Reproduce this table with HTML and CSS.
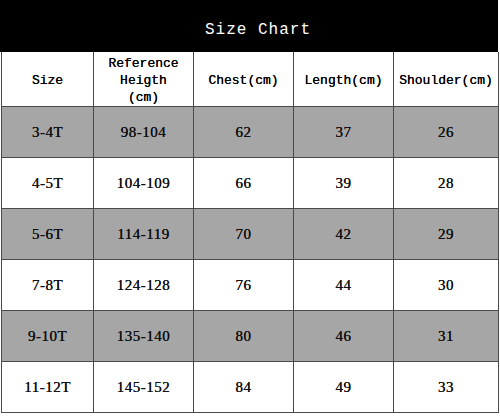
FILE: index.html
```html
<!DOCTYPE html>
<html>
<head>
<meta charset="utf-8">
<link rel="stylesheet" href="styles.css">
</head>
<body>
<div class="chart">
  <div class="title">Size Chart</div>
  <table class="grid">
    <colgroup>
      <col class="c1"><col class="c2"><col class="c3"><col class="c4"><col class="c5">
    </colgroup>
    <thead>
      <tr class="head">
        <th>Size</th>
        <th>Reference<br>Heigth<br>(cm)</th>
        <th>Chest(cm)</th>
        <th>Length(cm)</th>
        <th>Shoulder(cm)</th>
      </tr>
    </thead>
    <tbody>
      <tr class="shade"><td>3-4T</td><td>98-104</td><td>62</td><td>37</td><td>26</td></tr>
      <tr><td>4-5T</td><td>104-109</td><td>66</td><td>39</td><td>28</td></tr>
      <tr class="shade"><td>5-6T</td><td>114-119</td><td>70</td><td>42</td><td>29</td></tr>
      <tr><td>7-8T</td><td>124-128</td><td>76</td><td>44</td><td>30</td></tr>
      <tr class="shade"><td>9-10T</td><td>135-140</td><td>80</td><td>46</td><td>31</td></tr>
      <tr><td>11-12T</td><td>145-152</td><td>84</td><td>49</td><td>33</td></tr>
    </tbody>
  </table>
</div>
</body>
</html>
```
FILE: styles.css
```css
html, body {
  margin: 0;
  padding: 0;
  background: #fff;
}
.chart {
  width: 500px;
}
.title {
  width: 498px;
  height: 52px;
  background: #000;
  color: #fff;
  font-family: "Liberation Mono", monospace;
  font-size: 16px;
  letter-spacing: 1px;
  display: flex;
  align-items: center;
  justify-content: center;
  padding-left: 18px;
  padding-top: 7px;
  box-sizing: border-box;
}
.grid {
  margin-left: 1px;
  width: 497px;
  border-collapse: collapse;
  table-layout: fixed;
}
.c1 { width: 92px; }
.c2 { width: 100px; }
.c3 { width: 100px; }
.c4 { width: 100px; }
.c5 { width: 105px; }
.grid th, .grid td {
  border: 1px solid #4a4a4a;
  text-align: center;
  vertical-align: middle;
  padding: 0;
  color: #111;
}
.grid th {
  height: 51px;
  padding-top: 3px;
  border-top: none;
  font-family: "Liberation Mono", monospace;
  font-weight: normal;
  font-size: 13px;
  line-height: 17px;
  color: #000;
  text-shadow: 0 0 0.3px #000;
}
.grid td {
  height: 50px;
  font-family: "Liberation Serif", serif;
  font-size: 15px;
  letter-spacing: 0.5px;
  font-weight: normal;
  text-shadow: 0 0 0.4px #000;
}
.shade td {
  background: #a6a6a6;
}
```
